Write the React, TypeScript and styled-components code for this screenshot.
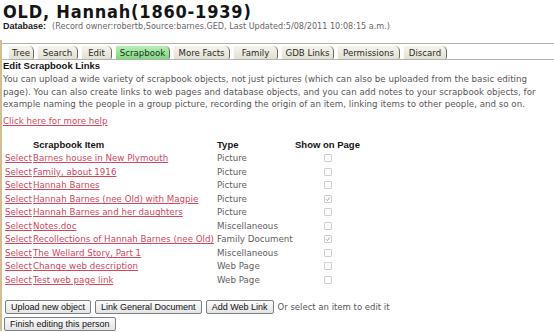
import React from "react";
import styled, { createGlobalStyle } from "styled-components";

const GlobalStyle = createGlobalStyle`
    body {
        margin: 0;
        background: #fff;
        font-family: "DejaVu Sans", Verdana, sans-serif;
        color: #5a5657;
    }
`;

const Page = styled.div`
    width: 554px;
    height: 332px;
    overflow: hidden;
`;

const Header = styled.header`
    padding: 2px 0 0 3px;
    height: 38px;
`;

const Title = styled.h1`
    margin: 0;
    font-family: "DejaVu Sans Condensed", "DejaVu Sans", sans-serif;
    font-stretch: condensed;
    font-weight: 700;
    font-size: 18px;
    letter-spacing: 0.8px;
    line-height: 19px;
    color: #141414;
`;

const DbLine = styled.div`
    font-size: 8.1px;
    line-height: 10px;
    color: #6a6666;

    b {
        font-family: "Liberation Sans", Arial, sans-serif;
        font-size: 9px;
        color: #1a1a1a;
        margin-right: 6px;
    }
`;

const Content = styled.main`
    border-left: 2px solid #d3be93;
    padding-top: 3px;
`;

const TabBar = styled.nav`
    display: flex;
    gap: 3px;
    align-items: flex-end;
    height: 15px;
    padding-left: 6px;
    border-top: 1px solid #b4b2ac;
    border-bottom: 1px solid #b4b2ac;
`;

const Tab = styled.span<{ $w: number; $active?: boolean }>`
    box-sizing: border-box;
    width: ${({ $w }) => $w}px;
    height: 13px;
    display: flex;
    align-items: center;
    justify-content: center;
    font-size: 8.6px;
    color: #2a2a2a;
    background: ${({ $active }) =>
        $active
            ? "linear-gradient(#b3f0b2, #7fda7f)"
            : "linear-gradient(#f6f4ee, #e2dfd3)"};
    border-left: 1px solid #fbfaf6;
    border-right: 1.5px solid #6c6a66;
    border-top-right-radius: 5px;
    border-bottom-right-radius: 2px;
`;

const Section = styled.section`
    padding-left: 1px;
`;

const SectionTitle = styled.h2`
    margin: 0;
    font-family: "Liberation Sans", Arial, sans-serif;
    font-weight: 700;
    font-size: 9.5px;
    line-height: 11px;
    color: #151515;
`;

const Intro = styled.p`
    margin: 2px 0 0;
    font-size: 8.7px;
    line-height: 12.7px;
    white-space: nowrap;
`;

const Link = styled.a`
    color: #d2475e;
    text-decoration: underline;
    cursor: pointer;
`;

const HelpLine = styled.p`
    margin: 4px 0 0;
    font-size: 8.7px;
    line-height: 12px;
`;

const Table = styled.div`
    margin: 11px 0 0 2px;
    display: grid;
    grid-template-columns: 28px 184px 77px 67px;
    grid-auto-rows: 13.5px;
    align-items: center;
    font-size: 8.7px;
    white-space: nowrap;
`;

const HeadCell = styled.div<{ $center?: boolean }>`
    font-family: "Liberation Sans", Arial, sans-serif;
    font-weight: 700;
    font-size: 9.5px;
    color: #151515;
    text-align: ${({ $center }) => ($center ? "center" : "left")};
`;

const TypeCell = styled.div`
    color: #626060;
`;

const CheckCell = styled.div`
    display: flex;
    justify-content: center;
`;

const Box = styled.span`
    box-sizing: border-box;
    width: 8px;
    height: 8px;
    border: 1px solid #cfcfcf;
    border-radius: 1px;
    background: #fdfdfd;
    display: flex;
    align-items: center;
    justify-content: center;
`;

const Actions = styled.div`
    margin: 13px 0 0 2px;
    display: flex;
    align-items: center;
    gap: 4px;
    height: 14px;
    font-size: 8.5px;
`;

const Button = styled.button`
    height: 14px;
    padding: 0 5px;
    font-family: "Liberation Sans", Arial, sans-serif;
    font-size: 9px;
    color: #111;
    background: linear-gradient(#fbfbfb, #e4e4e4);
    border: 1px solid #7d8088;
    border-radius: 2px;
    line-height: 12px;
`;

const FinishRow = styled.div`
    margin: 3px 0 0 1px;
    display: flex;
`;

interface IItem {
    title: string;
    type: string;
    shown: boolean;
}

const items: IItem[] = [
    { title: "Barnes house in New Plymouth", type: "Picture", shown: false },
    { title: "Family, about 1916", type: "Picture", shown: false },
    { title: "Hannah Barnes", type: "Picture", shown: false },
    { title: "Hannah Barnes (nee Old) with Magpie", type: "Picture", shown: true },
    { title: "Hannah Barnes and her daughters", type: "Picture", shown: false },
    { title: "Notes.doc", type: "Miscellaneous", shown: false },
    { title: "Recollections of Hannah Barnes (nee Old)", type: "Family Document", shown: true },
    { title: "The Wellard Story, Part 1", type: "Miscellaneous", shown: false },
    { title: "Change web description", type: "Web Page", shown: false },
    { title: "Test web page link", type: "Web Page", shown: false },
];

const tabs: [string, number][] = [
    ["Tree", 26],
    ["Search", 41],
    ["Edit", 31],
    ["Scrapbook", 55],
    ["More Facts", 57],
    ["Family", 45],
    ["GDB Links", 53],
    ["Permissions", 63],
    ["Discard", 44],
];

const CheckBox: React.FC<{ checked: boolean }> = ({ checked }) => (
    <Box>
        {checked && (
            <svg width="6" height="6" viewBox="0 0 6 6">
                <path d="M1 3.2 L2.4 4.6 L5 1.4" fill="none" stroke="#a9a9a9" strokeWidth="1" />
            </svg>
        )}
    </Box>
);

function App() {
    return (
        <Page>
            <GlobalStyle />
            <Header>
                <Title>OLD, Hannah(1860-1939)</Title>
                <DbLine>
                    <b>Database:</b>
                    (Record owner:robertb,Source:barnes.GED, Last Updated:5/08/2011 10:08:15 a.m.)
                </DbLine>
            </Header>
            <Content>
                <TabBar>
                    {tabs.map(([name, w]) => (
                        <Tab key={name} $w={w} $active={name === "Scrapbook"}>
                            {name}
                        </Tab>
                    ))}
                </TabBar>
                <Section>
                    <SectionTitle>Edit Scrapbook Links</SectionTitle>
                    <Intro>
                        You can upload a wide variety of scrapbook objects, not just pictures (which can also be uploaded from the basic editing
                        <br />
                        page). You can also create links to web pages and database objects, and you can add notes to your scrapbook objects, for
                        <br />
                        example naming the people in a group picture, recording the origin of an item, linking items to other people, and so on.
                    </Intro>
                    <HelpLine>
                        <Link>Click here for more help</Link>
                    </HelpLine>
                    <Table>
                        <HeadCell />
                        <HeadCell>Scrapbook Item</HeadCell>
                        <HeadCell>Type</HeadCell>
                        <HeadCell $center>Show on Page</HeadCell>
                        {items.map((item) => (
                            <React.Fragment key={item.title}>
                                <Link>Select</Link>
                                <Link>{item.title}</Link>
                                <TypeCell>{item.type}</TypeCell>
                                <CheckCell>
                                    <CheckBox checked={item.shown} />
                                </CheckCell>
                            </React.Fragment>
                        ))}
                    </Table>
                    <Actions>
                        <Button>Upload new object</Button>
                        <Button>Link General Document</Button>
                        <Button>Add Web Link</Button>
                        <span>Or select an item to edit it</span>
                    </Actions>
                    <FinishRow>
                        <Button>Finish editing this person</Button>
                    </FinishRow>
                </Section>
            </Content>
        </Page>
    );
}

export default App;
